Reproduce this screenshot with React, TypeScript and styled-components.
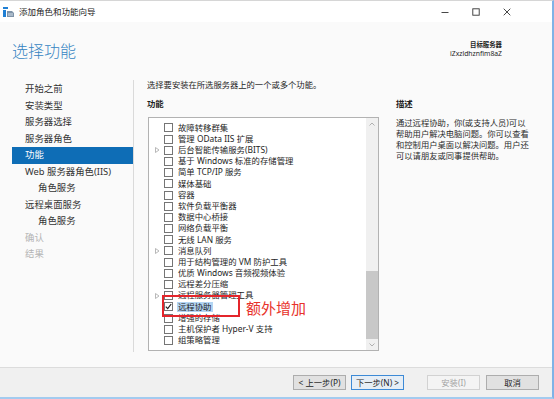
import styled, { createGlobalStyle } from "styled-components";

/* ========== Global ========== */
const GlobalStyle = createGlobalStyle`
  html, body { margin: 0; padding: 0; background: #ffffff; }
  body {
    font-family: "Noto Sans", "Noto Sans CJK SC", sans-serif;
    color: #1e1e1e;
  }
`;

/* ========== Window chrome ========== */
const Window = styled.div`
  position: relative;
  width: 554px;
  height: 399px;
  box-sizing: border-box;
  border-top: 1px solid #d6d6d6;
  border-right: 2px solid #7fb3e6;
  border-bottom: 2px solid #a3cbef;
  background: #fafafa;
  display: flex;
  flex-direction: column;
  overflow: hidden;
`;

const TopAccent = styled.div`
  position: absolute;
  left: 20px;
  top: -1px;
  width: 62px;
  height: 1px;
  background: #e66a2c;
`;

const TitleBar = styled.div`
  height: 21px;
  flex-shrink: 0;
  background: #ffffff;
  display: flex;
  align-items: center;
  padding-left: 3px;
`;

const TitleText = styled.span`
  margin-left: 5px;
  font-size: 8.5px;
  line-height: 12px;
  color: #1b1b1b;
`;

const WinControls = styled.div`
  margin-left: auto;
  margin-right: 30px;
  display: flex;
`;

const WinBtn = styled.div`
  width: 31px;
  height: 21px;
  display: flex;
  align-items: center;
  justify-content: center;
`;

/* ========== Header ========== */
const Header = styled.div`
  height: 53px;
  flex-shrink: 0;
  display: flex;
  justify-content: space-between;
  align-items: flex-start;
  padding: 0 50px 0 12px;
`;

const PageTitle = styled.h1`
  margin: 18.5px 0 0;
  font-size: 16px;
  line-height: 20px;
  font-weight: 300;
  color: #3584c2;
  letter-spacing: 0;
`;

const ServerInfo = styled.div`
  margin-top: 18px;
  text-align: right;
  font-size: 6.8px;
  line-height: 9px;
  color: #1e1e1e;
`;

const ServerLabel = styled.div`
  font-weight: 700;
  font-size: 6.4px;
`;

/* ========== Content ========== */
const Content = styled.div`
  height: 292px;
  flex-shrink: 0;
  display: flex;
`;

const Nav = styled.div`
  width: 134px;
  flex-shrink: 0;
  margin: 5px 0 15px;
  padding-top: 1px;
  border-right: 1px solid #dadada;
  box-sizing: border-box;
`;

const NavItem = styled.div<{ $active?: boolean; $sub?: boolean; $disabled?: boolean }>`
  margin-left: 12px;
  height: 16.5px;
  padding-left: ${({ $sub }) => ($sub ? "26px" : "13px")};
  font-size: 9.4px;
  line-height: 16.5px;
  white-space: nowrap;
  background: ${({ $active }) => ($active ? "#0e6db6" : "transparent")};
  color: ${({ $active, $disabled }) =>
    $active ? "#ffffff" : $disabled ? "#b4b4b4" : "#333333"};
`;

const Main = styled.div`
  flex: 1;
  padding: 4px 0 0 13px;
  display: grid;
  grid-template-columns: 232px 1fr;
  grid-template-rows: auto auto 1fr;
  column-gap: 17px;
`;

const Instruction = styled.div`
  grid-column: 1 / span 2;
  font-size: 8.3px;
  line-height: 11px;
`;

const SectionLabel = styled.div`
  margin: 8.3px 0 8px;
  font-size: 8.4px;
  line-height: 11px;
  font-weight: 700;
`;

const ListBox = styled.div`
  position: relative;
  margin-left: 1px;
  height: 234px;
  box-sizing: border-box;
  border: 1px solid #b2b2b2;
  background: #ffffff;
  display: flex;
`;

const Rows = styled.div`
  flex: 1;
  padding: 4px 0 0 6px;
`;

const Row = styled.div`
  height: 11.2px;
  display: flex;
  align-items: center;
`;

const Expander = styled.div`
  width: 9px;
  height: 11px;
  display: flex;
  align-items: center;
`;

const CheckBox = styled.div`
  width: 9px;
  height: 9px;
  box-sizing: border-box;
  border: 1px solid #757575;
  background: #ffffff;
  display: flex;
  align-items: center;
  justify-content: center;
`;

const RowLabel = styled.span<{ $selected?: boolean }>`
  margin-left: 4px;
  padding: 0 1px;
  font-size: 8.4px;
  line-height: 10.5px;
  white-space: nowrap;
  background: ${({ $selected }) => ($selected ? "#b3d5f3" : "transparent")};
`;

const ScrollBar = styled.div`
  width: 12px;
  flex-shrink: 0;
  background: #f0f0f0;
  display: flex;
  flex-direction: column;
`;

const ScrollArrow = styled.div`
  height: 11px;
  flex-shrink: 0;
  display: flex;
  align-items: center;
  justify-content: center;
`;

const ScrollThumb = styled.div`
  margin-top: auto;
  height: 68px;
  background: #c8c8c8;
`;

const RedFrame = styled.div`
  position: absolute;
  left: 12.5px;
  top: 177px;
  width: 78px;
  height: 22px;
  box-sizing: border-box;
  border: 2px solid #e4252b;
`;

const RedNote = styled.div`
  position: absolute;
  left: 97px;
  top: 181px;
  font-size: 15px;
  line-height: 18px;
  color: #e8322b;
  white-space: nowrap;
`;

const Description = styled.div`
  font-size: 8.3px;
  line-height: 11px;
  color: #2b2b2b;
`;

/* ========== Footer ========== */
const Footer = styled.div`
  height: 30px;
  box-sizing: border-box;
  border-top: 1px solid #dcdcdc;
  background: #f0f0f0;
  display: flex;
  align-items: center;
  justify-content: flex-end;
  padding-right: 13px;
`;

const BtnGroup = styled.div<{ $gap: number; $ml?: number }>`
  display: flex;
  gap: ${({ $gap }) => $gap}px;
  margin-left: ${({ $ml }) => $ml ?? 0}px;
`;

const Button = styled.button<{ $variant?: "focus" | "disabled" }>`
  width: 53px;
  height: 15px;
  padding: 0;
  box-sizing: border-box;
  font-family: "Noto Sans", "Noto Sans CJK SC", sans-serif;
  font-size: 8.3px;
  line-height: 13px;
  border: 1px solid
    ${({ $variant }) =>
      $variant === "focus" ? "#3d8ad6" : $variant === "disabled" ? "#d2d2d2" : "#adadad"};
  background: ${({ $variant }) =>
    $variant === "focus" ? "#e6eef6" : $variant === "disabled" ? "#f4f4f4" : "#e1e1e1"};
  color: ${({ $variant }) => ($variant === "disabled" ? "#a2a2a2" : "#1e1e1e")};
`;

/* ========== Data ========== */
interface Feature {
  name: string;
  expand?: boolean;
  checked?: boolean;
}

const features: Feature[] = [
  { name: "故障转移群集" },
  { name: "管理 OData IIS 扩展" },
  { name: "后台智能传输服务(BITS)", expand: true },
  { name: "基于 Windows 标准的存储管理" },
  { name: "简单 TCP/IP 服务" },
  { name: "媒体基础" },
  { name: "容器" },
  { name: "软件负载平衡器" },
  { name: "数据中心桥接" },
  { name: "网络负载平衡" },
  { name: "无线 LAN 服务" },
  { name: "消息队列", expand: true },
  { name: "用于结构管理的 VM 防护工具" },
  { name: "优质 Windows 音频视频体验" },
  { name: "远程差分压缩" },
  { name: "远程服务器管理工具", expand: true },
  { name: "远程协助", checked: true },
  { name: "增强的存储" },
  { name: "主机保护者 Hyper-V 支持" },
  { name: "组策略管理" },
];

const navItems = [
  { label: "开始之前" },
  { label: "安装类型" },
  { label: "服务器选择" },
  { label: "服务器角色" },
  { label: "功能", active: true },
  { label: "Web 服务器角色(IIS)" },
  { label: "角色服务", sub: true },
  { label: "远程桌面服务" },
  { label: "角色服务", sub: true },
  { label: "确认", disabled: true },
  { label: "结果", disabled: true },
];

/* ========== Icons ========== */
const WizardIcon = () => (
  <svg width="11" height="10" viewBox="0 0 11 10">
    <rect x="0" y="0" width="5" height="2" fill="#1f7fd4" />
    <rect x="0" y="3" width="3" height="7" fill="#1f7fd4" />
    <path d="M4 4 L9 4 L11 6 L11 10 L4 10 Z" fill="#7f93a8" />
    <rect x="5" y="6" width="5" height="3" fill="#a9b9c9" />
  </svg>
);

const Triangle = () => (
  <svg width="5" height="6" viewBox="0 0 5 6">
    <path d="M0.5 0.5 L4 3 L0.5 5.5 Z" fill="none" stroke="#a6a6a6" strokeWidth="0.8" />
  </svg>
);

const Check = () => (
  <svg width="7" height="7" viewBox="0 0 7 7">
    <path d="M0.8 3.6 L2.7 5.6 L6.2 1" fill="none" stroke="#202020" strokeWidth="1.2" />
  </svg>
);

export default function App() {
  return (
    <>
      <GlobalStyle />
      <Window>
        <TopAccent />
        <TitleBar>
          <WizardIcon />
          <TitleText>添加角色和功能向导</TitleText>
          <WinControls>
            <WinBtn>
              <svg width="8" height="8" viewBox="0 0 8 8">
                <line x1="0.5" y1="4.5" x2="7.5" y2="4.5" stroke="#333" strokeWidth="0.9" />
              </svg>
            </WinBtn>
            <WinBtn>
              <svg width="8" height="8" viewBox="0 0 8 8">
                <rect x="0.8" y="0.8" width="6.4" height="6.4" fill="none" stroke="#333" strokeWidth="0.9" />
              </svg>
            </WinBtn>
            <WinBtn>
              <svg width="8" height="8" viewBox="0 0 8 8">
                <path d="M0.7 0.7 L7.3 7.3 M7.3 0.7 L0.7 7.3" stroke="#333" strokeWidth="0.9" />
              </svg>
            </WinBtn>
          </WinControls>
        </TitleBar>

        <Header>
          <PageTitle>选择功能</PageTitle>
          <ServerInfo>
            <ServerLabel>目标服务器</ServerLabel>
            <div>iZxzldhznfim8aZ</div>
          </ServerInfo>
        </Header>

        <Content>
          <Nav>
            {navItems.map((n, i) => (
              <NavItem key={i} $active={n.active} $sub={n.sub} $disabled={n.disabled}>
                {n.label}
              </NavItem>
            ))}
          </Nav>

          <Main>
            <Instruction>选择要安装在所选服务器上的一个或多个功能。</Instruction>
            <SectionLabel>功能</SectionLabel>
            <SectionLabel>描述</SectionLabel>
            <ListBox>
              <Rows>
                {features.map((f, i) => (
                  <Row key={i}>
                    <Expander>{f.expand && <Triangle />}</Expander>
                    <CheckBox>{f.checked && <Check />}</CheckBox>
                    <RowLabel $selected={f.checked}>{f.name}</RowLabel>
                  </Row>
                ))}
              </Rows>
              <ScrollBar>
                <ScrollArrow>
                  <svg width="6" height="4" viewBox="0 0 6 4">
                    <path d="M0.5 3.5 L3 1 L5.5 3.5" fill="none" stroke="#a8a8a8" strokeWidth="0.9" />
                  </svg>
                </ScrollArrow>
                <ScrollThumb />
                <ScrollArrow>
                  <svg width="6" height="4" viewBox="0 0 6 4">
                    <path d="M0.5 0.5 L3 3 L5.5 0.5" fill="none" stroke="#a8a8a8" strokeWidth="0.9" />
                  </svg>
                </ScrollArrow>
              </ScrollBar>
              <RedFrame />
              <RedNote>额外增加</RedNote>
            </ListBox>
            <Description>
              通过远程协助，你(或支持人员)可以
              <br />
              帮助用户解决电脑问题。你可以查看
              <br />
              和控制用户桌面以解决问题。用户还
              <br />
              可以请朋友或同事提供帮助。
            </Description>
          </Main>
        </Content>

        <Footer>
          <BtnGroup $gap={5}>
            <Button>&lt; 上一步(P)</Button>
            <Button $variant="focus">下一步(N) &gt;</Button>
          </BtnGroup>
          <BtnGroup $gap={6} $ml={23}>
            <Button $variant="disabled">安装(I)</Button>
            <Button>取消</Button>
          </BtnGroup>
        </Footer>
      </Window>
    </>
  );
}
